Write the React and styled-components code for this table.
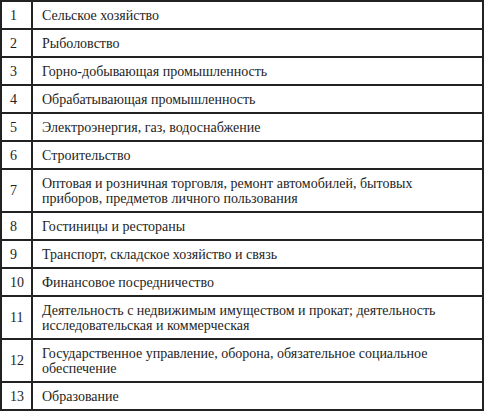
import React from 'react';
import styled, { createGlobalStyle } from 'styled-components';

const Global = createGlobalStyle`
    html, body {
        margin: 0;
        padding: 0;
        background: #fff;
    }
    body {
        font-family: serif;
    }
`;

const Grid = styled.div`
    box-sizing: border-box;
    width: 484px;
    border: 2px solid #222;
    border-bottom: none;
    font-family: Tinos, serif;
    font-size: 14px;
    line-height: 15px;
    color: #1e1e1e;
`;

const Row = styled.div`
    display: grid;
    grid-template-columns: 31px 1fr;
    min-height: ${p => (p.$lines === 2 ? 41 : 26)}px;
    border-bottom: 2px solid #222;
`;

const NumCell = styled.div`
    display: flex;
    align-items: center;
    padding-left: 8px;
    border-right: 2px solid #222;
`;

const TextCell = styled.div`
    display: flex;
    flex-direction: column;
    justify-content: center;
    padding-left: 9px;
    white-space: nowrap;
`;

const rows = [
    ['1', ['Сельское хозяйство']],
    ['2', ['Рыболовство']],
    ['3', ['Горно-добывающая промышленность']],
    ['4', ['Обрабатывающая промышленность']],
    ['5', ['Электроэнергия, газ, водоснабжение']],
    ['6', ['Строительство']],
    ['7', ['Оптовая и розничная торговля, ремонт автомобилей, бытовых', 'приборов, предметов личного пользования']],
    ['8', ['Гостиницы и рестораны']],
    ['9', ['Транспорт, складское хозяйство и связь']],
    ['10', ['Финансовое посредничество']],
    ['11', ['Деятельность с недвижимым имуществом и прокат; деятельность', 'исследовательская и коммерческая']],
    ['12', ['Государственное управление, оборона, обязательное социальное', 'обеспечение']],
    ['13', ['Образование']],
];

export default function App() {
    return (
        <>
            <Global />
            <Grid>
                {rows.map(([num, lines]) => (
                    <Row key={num} $lines={lines.length}>
                        <NumCell>{num}</NumCell>
                        <TextCell>
                            {lines.map((line, i) => (
                                <span key={i}>{line}</span>
                            ))}
                        </TextCell>
                    </Row>
                ))}
            </Grid>
        </>
    );
}
